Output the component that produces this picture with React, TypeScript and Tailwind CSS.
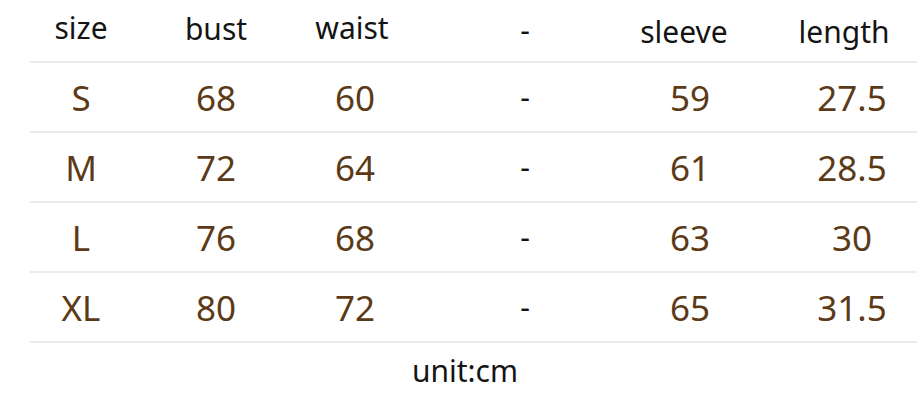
import React from "react";

const rows = [
  ["S", "68", "60", "-", "59", "27.5"],
  ["M", "72", "64", "-", "61", "28.5"],
  ["L", "76", "68", "-", "63", "30"],
  ["XL", "80", "72", "-", "65", "31.5"],
];

function Divider() {
  return <div className="ml-[30px] mr-[3px] h-[2px] bg-[#ebebeb]" />;
}

export default function App() {
  return (
    <div
      className="w-[920px] h-[410px] bg-white overflow-hidden"
      style={{ fontFamily: '"Noto Sans", "Noto Sans CJK SC", sans-serif' }}
    >
      <div className="grid grid-cols-[162px_108px_170px_170px_160px_150px] h-[61px] items-center text-[30px] text-[#141414] leading-none">
        <div className="flex justify-center pb-[6px]">size</div>
        <div className="flex justify-center pb-[4px]">bust</div>
        <div className="flex justify-center pr-[6px] pb-[6px]">waist</div>
        <div className="flex justify-center pb-[2px]">-</div>
        <div className="flex justify-center pr-[12px] pt-[2px]">sleeve</div>
        <div className="flex justify-center pr-[2px] pt-[2px]">length</div>
      </div>
      <Divider />
      {rows.map((r) => (
        <React.Fragment key={r[0]}>
          <div className="grid grid-cols-[162px_108px_170px_170px_160px_150px] h-[68px] items-center text-[35px] text-[#5c3a17] leading-none">
            <div className="flex justify-center">{r[0]}</div>
            <div className="flex justify-center">{r[1]}</div>
            <div className="flex justify-center">{r[2]}</div>
            <div className="flex justify-center text-[#141414] text-[30px]">{r[3]}</div>
            <div className="flex justify-center">{r[4]}</div>
            <div className="flex justify-center pl-[14px]">{r[5]}</div>
          </div>
          <Divider />
        </React.Fragment>
      ))}
      <div className="flex justify-center pt-[13px] text-[30px] text-[#141414] leading-none">
        <span className="ml-[10px]">unit:cm</span>
      </div>
    </div>
  );
}
